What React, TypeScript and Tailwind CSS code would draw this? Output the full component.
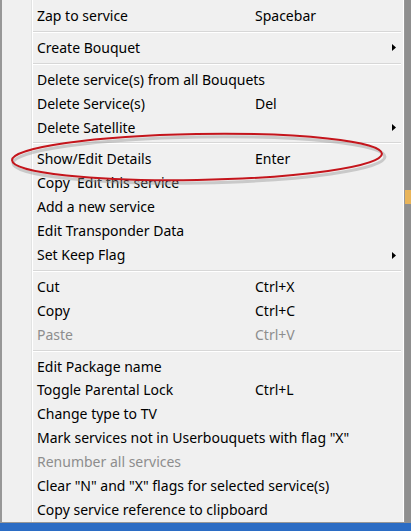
import React from "react";

type Item =
  | { sep: true }
  | { label: string; key?: string; sub?: boolean; disabled?: boolean; sep?: false };

const items: Item[] = [
  { label: "Zap to service", key: "Spacebar" },
  { sep: true },
  { label: "Create Bouquet", sub: true },
  { sep: true },
  { label: "Delete service(s) from all Bouquets" },
  { label: "Delete Service(s)", key: "Del" },
  { label: "Delete Satellite", sub: true },
  { sep: true },
  { label: "Show/Edit Details", key: "Enter" },
  { label: "Copy  Edit this service" },
  { label: "Add a new service" },
  { label: "Edit Transponder Data" },
  { label: "Set Keep Flag", sub: true },
  { sep: true },
  { label: "Cut", key: "Ctrl+X" },
  { label: "Copy", key: "Ctrl+C" },
  { label: "Paste", key: "Ctrl+V", disabled: true },
  { sep: true },
  { label: "Edit Package name" },
  { label: "Toggle Parental Lock", key: "Ctrl+L" },
  { label: "Change type to TV" },
  { label: 'Mark services not in Userbouquets with flag "X"' },
  { label: "Renumber all services", disabled: true },
  { label: 'Clear "N" and "X" flags for selected service(s)' },
  { label: "Copy service reference to clipboard" },
];

function Arrow() {
  return (
    <svg width="4" height="7" viewBox="0 0 4 7" className="block">
      <path d="M0 0 L4 3.5 L0 7 Z" fill="#000" />
    </svg>
  );
}

export default function App() {
  return (
    <div
      className="relative w-[411px] h-[531px] overflow-hidden bg-[#2b6cc4]"
      style={{ fontFamily: '"Noto Sans", "Open Sans", sans-serif' }}
    >
      <div className="flex h-[523px]">
        {/* menu */}
        <div className="relative w-[405px] h-full bg-[#f0f0f0] border-l-2 border-r border-b border-[#979797] flex">
          {/* gutter */}
          <div className="w-[30px] shrink-0 border-r border-[#e2e3e3]" />
          <div className="w-px bg-white shrink-0" />
          <div className="flex-1 flex flex-col pt-[4px]">
            {items.map((it, i) =>
              it.sep ? (
                <div key={i} className="h-[8px] flex flex-col justify-center pr-[3px]">
                  <div className="h-px bg-[#d7d7d7]" />
                  <div className="h-px bg-white" />
                </div>
              ) : (
                <div
                  key={i}
                  className={
                    "h-[24px] flex items-center text-[14px] leading-none " +
                    (it.disabled ? "text-[#8d8d8d]" : "text-black")
                  }
                >
                  <span className="w-[222px] pl-[4px] whitespace-pre shrink-0">{it.label}</span>
                  <span className="flex-1 whitespace-pre">{it.key ?? ""}</span>
                  <span className="w-[12px] flex justify-start">{it.sub ? <Arrow /> : null}</span>
                </div>
              )
            )}
          </div>
          <div className="absolute right-0 top-0 bottom-0 w-px bg-white" />
        </div>
        {/* underlying window strip */}
        <div className="w-[6px] h-full flex flex-col bg-[#9a9a9a]">
          <div className="h-[190px] bg-[#8f8f8f]" />
          <div className="h-[14px] bg-[#e8b45a]" />
          <div className="flex-1 bg-[#8f8f8f]" />
        </div>
      </div>

      {/* red annotation ellipse */}
      <svg
        className="absolute left-0 top-0 pointer-events-none"
        width="411"
        height="531"
        viewBox="0 0 411 531"
      >
        <ellipse
          cx="199"
          cy="160"
          rx="186"
          ry="23"
          transform="rotate(-1 199 160)"
          fill="none"
          stroke="#9a9a9a"
          strokeOpacity="0.45"
          strokeWidth="3"
        />
        <ellipse
          cx="197"
          cy="157"
          rx="185"
          ry="23"
          transform="rotate(-1 197 157)"
          fill="none"
          stroke="#c4151c"
          strokeWidth="2"
        />
      </svg>
    </div>
  );
}
